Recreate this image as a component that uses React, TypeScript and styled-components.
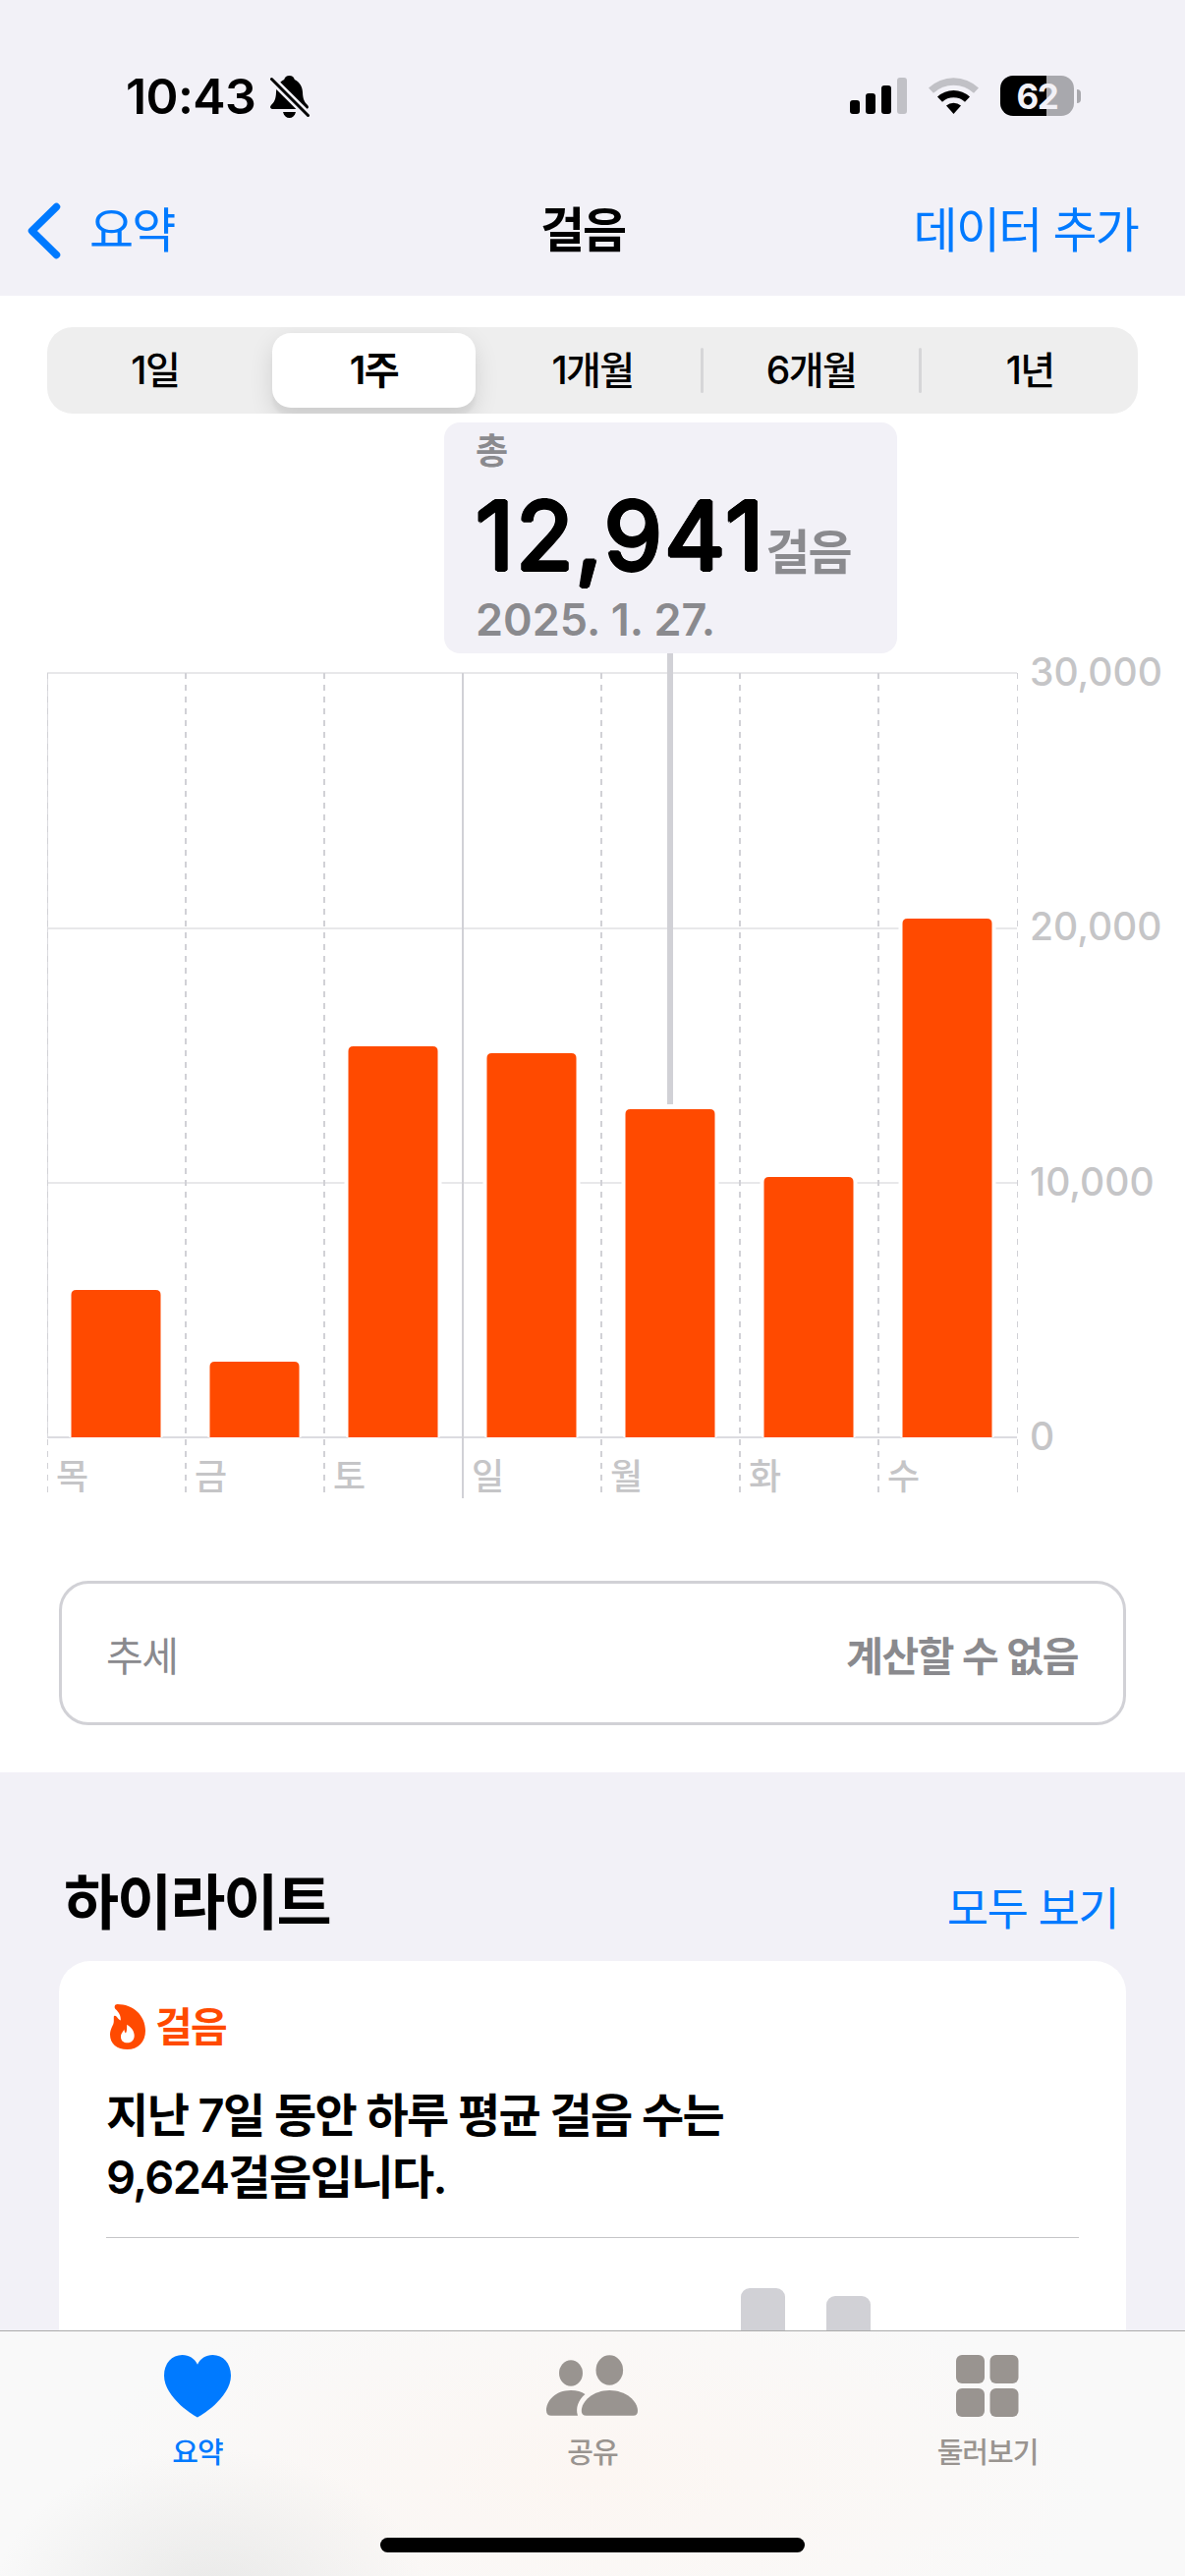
import React from "react";
import styled, { createGlobalStyle } from "styled-components";

const BLUE = "#007aff";
const ORANGE = "#ff4a00";
const GRAY = "#8a8a8e";
const PAGE = "#f2f1f7";
const FAINT = "#c5c5c7";

const GlobalStyle = createGlobalStyle`
  * { box-sizing: border-box; }
  body {
    margin: 0;
    background: ${PAGE};
    font-family: Inter, "Noto Sans CJK KR", sans-serif;
  }
`;

const Screen = styled.div`
  width: 1206px;
  height: 2622px;
  display: flex;
  flex-direction: column;
  overflow: hidden;
  background: ${PAGE};
  color: #000;
  white-space: nowrap;
`;

/* ---------- status bar ---------- */

const StatusBar = styled.div`
  height: 168px;
  flex: none;
  padding: 77px 106px 0 128px;
  display: flex;
  align-items: flex-start;
`;

const Clock = styled.div`
  width: 147px;
  height: 43px;
  font-size: 50px;
  line-height: 43px;
  font-weight: 600;
  letter-spacing: -0.6px;
`;

const StatusIcons = styled.div`
  margin-left: auto;
  display: flex;
  align-items: center;
  height: 41px;
`;

const Signal = styled.svg`
  margin: 0 22px 0 0;
`;

const Battery = styled.div`
  width: 75px;
  height: 41px;
  margin-left: 22px;
  border-radius: 13px;
  background: linear-gradient(90deg, #000 0 47px, #a8a8ad 47px);
  color: ${PAGE};
  font-size: 35px;
  line-height: 42px;
  font-weight: 700;
  letter-spacing: -1.5px;
  text-align: center;
`;

const BatteryNub = styled.div`
  width: 4px;
  height: 14px;
  margin-left: 3px;
  border-radius: 0 4px 4px 0;
  background: #a8a8ad;
`;

/* ---------- navigation ---------- */

const NavBar = styled.div`
  height: 133px;
  flex: none;
  padding: 0 48px 0 28px;
  display: grid;
  grid-template-columns: 1fr auto 1fr;
  align-items: center;
  line-height: 60px;
`;

const BackButton = styled.div`
  display: flex;
  align-items: center;
  gap: 29px;
  color: ${BLUE};
  font-size: 49px;
  letter-spacing: -1.8px;
`;

const NavTitle = styled.div`
  font-size: 49px;
  font-weight: 700;
  letter-spacing: -2px;
`;

const NavAction = styled.div`
  justify-self: end;
  color: ${BLUE};
  font-size: 49px;
  letter-spacing: -1.8px;
`;

/* ---------- chart panel ---------- */

const ChartPanel = styled.section`
  height: 1503px;
  flex: none;
  padding: 32px 60px 0 48px;
  position: relative;
  background: #fff;
`;

const Segments = styled.div`
  width: 1110px;
  height: 88px;
  display: flex;
  align-items: center;
  border-radius: 26px;
  background: #eee;
  overflow: hidden;
`;

const Segment = styled.div<{ $selected?: boolean }>`
  flex: 1;
  height: 76px;
  margin: 0 6px;
  border-radius: 19px;
  text-align: center;
  font-size: 39px;
  line-height: 76px;
  font-weight: ${(p) => (p.$selected ? 600 : 500)};
  letter-spacing: -1.6px;
  background: ${(p) => (p.$selected ? "#fff" : "transparent")};
  box-shadow: ${(p) =>
    p.$selected ? "0 9px 24px rgba(0,0,0,.12), 0 9px 3px rgba(0,0,0,.04)" : "none"};
`;

const SegmentDivider = styled.i<{ $visible: boolean }>`
  width: 3px;
  height: 46px;
  border-radius: 2px;
  background: ${(p) => (p.$visible ? "#d6d6d8" : "transparent")};
`;

const Callout = styled.div`
  position: absolute;
  left: 452px;
  top: 129px;
  width: 461px;
  height: 235px;
  padding: 0 32px;
  display: flex;
  flex-direction: column;
  border-radius: 16px;
  background: ${PAGE};
  color: ${GRAY};
  font-weight: 600;
`;

const CalloutLabel = styled.div`
  height: 60px;
  font-size: 36px;
  line-height: 58px;
`;

const CalloutValue = styled.div`
  height: 111px;
  display: flex;
  align-items: baseline;
  line-height: 111px;
`;

const CalloutNumber = styled.span`
  color: #000;
  font-size: 96px;
  font-weight: 400;
  letter-spacing: 2px;
  text-shadow: 2px 0 #000, -2px 0 #000, 0 2px #000, 0 -2px #000,
    1.4px 1.4px #000, -1.4px 1.4px #000, 1.4px -1.4px #000, -1.4px -1.4px #000;
`;

const CalloutUnit = styled.span`
  font-size: 49px;
  letter-spacing: -2px;
`;

const CalloutDate = styled.div`
  font-size: 45px;
  line-height: 60px;
`;

const ChartRow = styled.div`
  display: flex;
  height: 842px;
  margin-top: 262px;
`;

const Plot = styled.div`
  width: 988px;
  display: flex;
  flex-direction: column;
`;

const PlotSvg = styled.svg`
  display: block;
  flex: none;
  margin-bottom: -62px;
`;

const Days = styled.div`
  display: grid;
  grid-template-columns: repeat(7, 141px);
  padding-left: 9px;
  color: ${FAINT};
  font-size: 36px;
  line-height: 56px;
  font-weight: 500;
  margin-top: 12px;
`;

const Scale = styled.div`
  display: flex;
  flex-direction: column;
  justify-content: space-between;
  height: 818px;
  margin: -19px 0 0 12px;
  color: ${FAINT};
  font-size: 39px;
  line-height: 40px;
  font-weight: 500;
`;

const TrendBox = styled.div`
  width: 1086px;
  height: 147px;
  margin: 84px 0 0 12px;
  padding: 0 46px 0 45px;
  display: flex;
  align-items: center;
  justify-content: space-between;
  border: 3px solid #d1d1d6;
  border-radius: 30px;
  color: ${GRAY};
  font-size: 41px;
  letter-spacing: -1.4px;
`;

const TrendValue = styled.span`
  font-weight: 600;
`;

/* ---------- highlights ---------- */

const Highlights = styled.section`
  height: 568px;
  flex: none;
  padding: 89px 60px 0;
  display: flex;
  flex-direction: column;
  overflow: hidden;
`;

const SectionHeader = styled.div`
  height: 103px;
  flex: none;
  padding: 0 8px 0 5px;
  display: flex;
  align-items: baseline;
  justify-content: space-between;
  line-height: 88px;
`;

const SectionTitle = styled.h2`
  margin: 0;
  font-size: 61px;
  font-weight: 700;
  letter-spacing: -2px;
`;

const SectionLink = styled.a`
  color: ${BLUE};
  font-size: 46px;
  letter-spacing: -1.6px;
`;

const Card = styled.div`
  height: 700px;
  flex: none;
  padding: 38px 48px 0;
  border-radius: 32px;
  background: #fff;
`;

const CardHeader = styled.div`
  height: 58px;
  padding-left: 4px;
  display: flex;
  align-items: center;
  gap: 10px;
  color: ${ORANGE};
  font-size: 41px;
  line-height: 58px;
  font-weight: 600;
  letter-spacing: -1.6px;
`;

const CardText = styled.p`
  margin: 29px 0 0;
  font-size: 47px;
  line-height: 63px;
  font-weight: 600;
  letter-spacing: -1.6px;
`;

const CardBars = styled.div`
  margin-top: 30px;
  padding: 51px 0 0 646px;
  display: flex;
  align-items: flex-start;
  gap: 42px;
  border-top: 1px solid #c6c6c8;
`;

const CardBar = styled.div<{ $offset: number }>`
  width: 45px;
  height: 200px;
  margin-top: ${(p) => p.$offset}px;
  border-radius: 9px;
  background: #d1d1d6;
`;

/* ---------- tab bar ---------- */

const TabBar = styled.nav`
  height: 250px;
  flex: none;
  display: flex;
  flex-direction: column;
  align-items: center;
  border-top: 1px solid #ababab;
  background:
    radial-gradient(220px 150px at 215px 270px, #e9e9e8 0%, rgba(236, 235, 234, 0) 100%),
    radial-gradient(520px 210px at 600px 150px, #fcf6f2 0%, rgba(252, 247, 244, 0) 100%),
    #f9f9f9;
`;

const Tabs = styled.div`
  width: 1206px;
  height: 210px;
  display: grid;
  grid-template-columns: repeat(3, 1fr);
`;

const Tab = styled.div<{ $active?: boolean }>`
  padding-top: 24px;
  display: flex;
  flex-direction: column;
  align-items: center;
  gap: 16px;
  color: ${(p) => (p.$active ? BLUE : "#999490")};
  font-size: 29px;
  line-height: 40px;
  font-weight: 500;
  letter-spacing: -1px;
`;

const HomeIndicator = styled.div`
  width: 432px;
  height: 15px;
  border-radius: 8px;
  background: #000;
`;

/* ---------- drawings ---------- */

const BellSlash = () => (
  <svg width="40" height="43" viewBox="0 0 40 43">
    <path d="M19.5 0C16.5 0 15 1.5 14.2 4 9 6.500 6.300 11 6 17 5.800 24 4 27 1 30-.8 32 .2 34 2.200 34H36.800C38.800 34 39.800 32 38 30 35 27 33.200 24 33 17 32.700 11 30 6.500 24.800 4 24 1.500 22.500 0 19.500 0ZM13 37H26C25 41 22.500 43 19.500 43S14 41 13 37Z" />
    <path d="M1 3 38.500 40.500" stroke={PAGE} strokeWidth="8" />
    <path d="M1.500 3.500 38.500 40.500" stroke="#000" strokeWidth="3" strokeLinecap="round" />
  </svg>
);

const SignalBars = () => (
  <Signal width="58" height="37" viewBox="0 0 58 37">
    <rect x="0" y="23" width="10" height="14" rx="3" />
    <rect x="16" y="16" width="10" height="21" rx="3" />
    <rect x="32" y="8" width="10" height="29" rx="3" />
    <rect x="48" y="0" width="10" height="37" rx="3" fill="#c1c1c6" />
  </Signal>
);

const Wifi = () => (
  <svg width="51" height="37" viewBox="0 0 51 37">
    <path d="M0 10.500A37 37 0 0 1 51 10.500L46 15.800A29.800 29.800 0 0 0 5 15.800Z" fill="#c1c1c6" />
    <path d="M9 19.500A24.500 24.500 0 0 1 42 19.500L37 24.700A17.200 17.200 0 0 0 14 24.700Z" />
    <path d="M18 28.500A12 12 0 0 1 33 28.500L25.500 37Z" />
  </svg>
);

const Chevron = () => (
  <svg width="34" height="58" viewBox="0 0 34 58">
    <path d="M29.500 4.500 4.500 29 29.500 53.500" fill="none" stroke={BLUE} strokeWidth="7.500" strokeLinecap="round" strokeLinejoin="round" />
  </svg>
);

const Flame = () => (
  <svg width="36" height="46" viewBox="0 0 36 46">
    <path
      fillRule="evenodd"
      fill={ORANGE}
      d="M7.500 0C23 0 36 11 36 27 36 38.500 28.500 46 17.500 46 7 46 0 40 0 31 0 24.500 3.800 21.500 3.800 17.500V13C3.800 11.500 5.500 11.300 6.500 12.500 7.500 14 9 15.500 10.800 16.500 11 12 9.500 8.500 5.500 5 4 3 4.500 0 7.500 0ZM17.200 20.800C17 24.500 17.500 27 16 29.500 15 28.500 14.500 27.200 14.300 25.500 13.500 28 11 29.500 11 33 11 37 13.500 39.300 17.700 39.300 21.800 39.300 24.700 36.500 24.700 32 24.700 27 21 23 17.200 20.800Z"
    />
  </svg>
);

const Heart = () => (
  <svg width="68" height="64" viewBox="0 0 68 64">
    <path d="M34 63.500C33 63.500 0 44 0 21 0 8.500 8 0 18.500 0 25.500 0 31 3.500 34 9.800 37 3.500 42.500 0 49.500 0 60 0 68 8.500 68 21 68 44 35 63.500 34 63.500Z" fill={BLUE} />
  </svg>
);

const People = () => (
  <svg width="94" height="64" viewBox="0 0 94 64" fill="currentColor">
    <ellipse cx="25" cy="18.500" rx="12" ry="13.200" />
    <ellipse cx="64.300" cy="15.500" rx="13.800" ry="15.200" />
    <path d="M39.500 40C36 37.500 31 36 25 36 9 36 0 47 0 56.500 0 60 1.800 61.700 5 61.700H32C29.500 54 32.500 46 39.500 40Z" />
    <path d="M64.300 36C48 36 35.800 47 35.800 57 35.800 60 37.500 61.700 40.500 61.700H88.500C91.500 61.700 93 60 93 57 93 47 81 36 64.300 36Z" />
  </svg>
);

const Grid = () => (
  <svg width="64" height="64" viewBox="0 0 64 64" fill="currentColor">
    {[0, 34].map((y) => [0, 34.500].map((x) => (
      <rect key={`${x}-${y}`} x={x} y={y} width="29" height="29" rx="6" />
    )))}
  </svg>
);

/* ---------- chart data ---------- */

const days = [
  { day: "목", height: 150 },
  { day: "금", height: 77 },
  { day: "토", height: 398 },
  { day: "일", height: 391 },
  { day: "월", height: 334 },
  { day: "화", height: 265 },
  { day: "수", height: 528 },
];

const WeekChart = () => (
  <PlotSvg width="988" height="842" viewBox="0 0 988 842" shapeRendering="crispEdges">
    {[2, 262, 521, 780].map((y) => (
      <rect key={y} x="0" y={y - 1} width="987" height="2" fill={y === 780 ? "#dcdce0" : "#e8e8ea"} />
    ))}
    <rect x="-0.500" y="2" width="1" height="778" fill="#dcdce0" />
    {[0, 1, 2, 3, 4, 5, 6, 7].map((i) => (
      <line
        key={i}
        x1={i * 141}
        x2={i * 141}
        y1="2"
        y2="842"
        stroke="#d1d1d6"
        strokeWidth={i === 7 ? 1 : 2}
        strokeDasharray={i === 3 ? undefined : "6 6"}
      />
    ))}
    <rect x="631" y="-18" width="6" height="459" fill="#d1d1d6" />
    {days.map(({ day, height }, i) => (
      <g key={day} shapeRendering="auto">
        <rect x={20.500 + i * 141} y={776 - height} width="99" height={height + 5} rx="6" fill="#fff" />
        <path
          d={`M${24.500 + i * 141} 780V${785 - height}q0-5 5-5h81q5 0 5 5V780Z`}
          fill={ORANGE}
        />
      </g>
    ))}
  </PlotSvg>
);

const Stem = styled.div`
  position: absolute;
  left: 679px;
  top: 364px;
  width: 6px;
  height: 20px;
  background: #d1d1d6;
`;

const ranges = ["1일", "1주", "1개월", "6개월", "1년"];

export default function App() {
  return (
    <Screen>
      <GlobalStyle />
      <StatusBar>
        <Clock>10:43</Clock>
        <BellSlash />
        <StatusIcons>
          <SignalBars />
          <Wifi />
          <Battery>62</Battery>
          <BatteryNub />
        </StatusIcons>
      </StatusBar>
      <NavBar>
        <BackButton>
          <Chevron />
          <span>요약</span>
        </BackButton>
        <NavTitle>걸음</NavTitle>
        <NavAction>데이터 추가</NavAction>
      </NavBar>

      <ChartPanel>
        <Segments>
          {ranges.map((label, i) => (
            <React.Fragment key={label}>
              {i > 0 && <SegmentDivider $visible={i > 2} />}
              <Segment $selected={i === 1}>{label}</Segment>
            </React.Fragment>
          ))}
        </Segments>
        <ChartRow>
          <Plot>
            <WeekChart />
            <Days>
              {days.map(({ day }) => (
                <span key={day}>{day}</span>
              ))}
            </Days>
          </Plot>
          <Scale>
            <span>30,000</span>
            <span>20,000</span>
            <span>10,000</span>
            <span>0</span>
          </Scale>
        </ChartRow>
        <TrendBox>
          <span>추세</span>
          <TrendValue>계산할 수 없음</TrendValue>
        </TrendBox>
        <Stem />
        <Callout>
          <CalloutLabel>총</CalloutLabel>
          <CalloutValue>
            <CalloutNumber>12,941</CalloutNumber>
            <CalloutUnit>걸음</CalloutUnit>
          </CalloutValue>
          <CalloutDate>2025. 1. 27.</CalloutDate>
        </Callout>
      </ChartPanel>

      <Highlights>
        <SectionHeader>
          <SectionTitle>하이라이트</SectionTitle>
          <SectionLink>모두 보기</SectionLink>
        </SectionHeader>
        <Card>
          <CardHeader>
            <Flame />
            <span>걸음</span>
          </CardHeader>
          <CardText>
            지난 7일 동안 하루 평균 걸음 수는
            <br />
            9,624걸음입니다.
          </CardText>
          <CardBars>
            <CardBar $offset={0} />
            <CardBar $offset={8} />
          </CardBars>
        </Card>
      </Highlights>

      <TabBar>
        <Tabs>
          <Tab $active>
            <Heart />
            <span>요약</span>
          </Tab>
          <Tab>
            <People />
            <span>공유</span>
          </Tab>
          <Tab>
            <Grid />
            <span>둘러보기</span>
          </Tab>
        </Tabs>
        <HomeIndicator />
      </TabBar>
    </Screen>
  );
}
